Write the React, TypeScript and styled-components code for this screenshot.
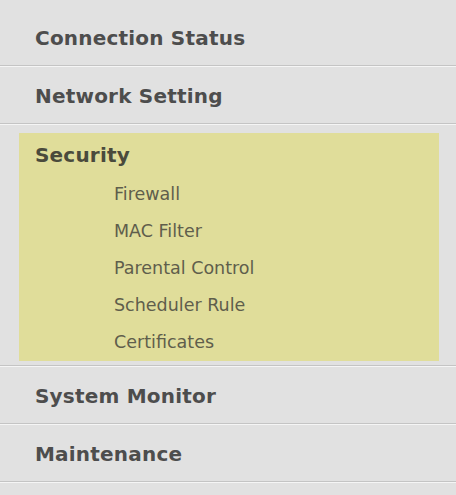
import React from "react";
import styled, { createGlobalStyle } from "styled-components";

const Global = createGlobalStyle`
  html, body { margin: 0; padding: 0; background: #e1e1e1; }
  body { font-family: "DejaVu Sans", "Liberation Sans", sans-serif; }
`;

const Nav = styled.nav`
  display: flex;
  flex-direction: column;
  width: 456px;
  height: 495px;
  overflow: hidden;
  padding-top: 9px;
  box-sizing: border-box;
  background: #e1e1e1;
`;

const Section = styled.div`
  border-bottom: 1px solid #c4c4c4;
  box-shadow: 0 1px 0 #f5f5f5;
  margin-bottom: 1px;
`;

const Heading = styled.div`
  height: 56px;
  display: flex;
  align-items: center;
  padding-left: 35px;
  padding-top: 1px;
  box-sizing: border-box;
  font-size: 20px;
  font-weight: bold;
  letter-spacing: 0.2px;
  color: #4d4d4d;
`;

const Panel = styled.div`
  margin: 8px 17px 4px 19px;
  background: #e0dd9a;
  padding-bottom: 1px;
`;

const PanelHeading = styled.div`
  height: 42px;
  display: flex;
  align-items: center;
  padding-left: 16px;
  padding-top: 1px;
  box-sizing: border-box;
  font-size: 20px;
  font-weight: bold;
  letter-spacing: 0.2px;
  color: #4a4a3c;
`;

const SubList = styled.ul`
  list-style: none;
  margin: 0;
  padding: 0 0 0 95px;
  display: flex;
  flex-direction: column;
`;

const SubItem = styled.li`
  height: 37px;
  display: flex;
  align-items: center;
  padding-top: 1px;
  box-sizing: border-box;
  font-size: 17.5px;
  color: #5f5e4c;
`;

const topItems = ["Connection Status", "Network Setting"];
const bottomItems = ["System Monitor", "Maintenance"];
const subItems = ["Firewall", "MAC Filter", "Parental Control", "Scheduler Rule", "Certificates"];

export default function App() {
  return (
    <>
      <Global />
      <Nav>
        {topItems.map((t) => (
          <Section key={t}>
            <Heading>{t}</Heading>
          </Section>
        ))}
        <Section>
          <Panel>
            <PanelHeading>Security</PanelHeading>
            <SubList>
              {subItems.map((s) => (
                <SubItem key={s}>{s}</SubItem>
              ))}
            </SubList>
          </Panel>
        </Section>
        {bottomItems.map((t) => (
          <Section key={t}>
            <Heading>{t}</Heading>
          </Section>
        ))}
        <Section>
          <Heading />
        </Section>
      </Nav>
    </>
  );
}
